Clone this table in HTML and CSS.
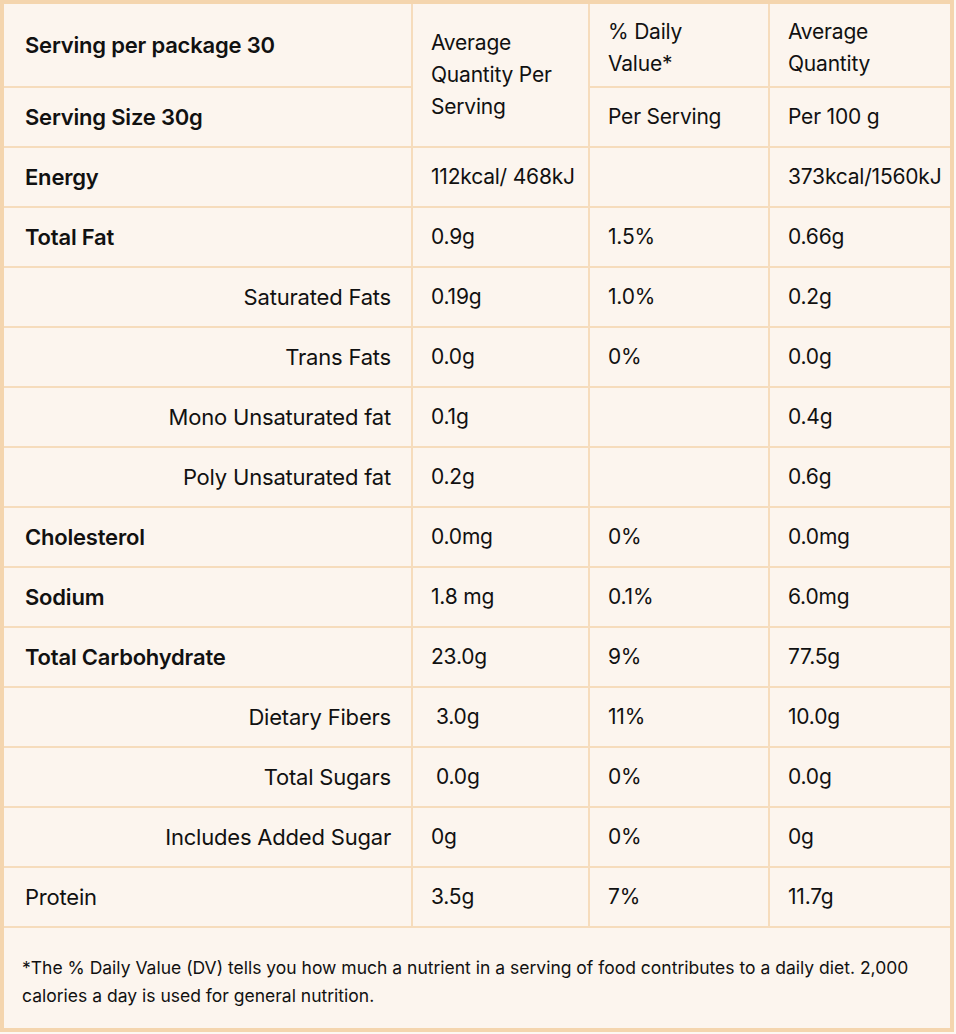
FILE: index.html
```html
<!DOCTYPE html>
<html lang="en">
<head>
<meta charset="utf-8">
<title>Nutrition Facts</title>
<link rel="stylesheet" href="styles.css">
</head>
<body>
<div class="panel">
<table class="facts">
  <colgroup>
    <col class="c1"><col class="c2"><col class="c3"><col class="c4">
  </colgroup>
  <tbody>
    <tr class="h1">
      <td class="name">Serving per package 30</td>
      <td rowspan="2" class="val">Average<br>Quantity Per<br>Serving</td>
      <td class="val top">% Daily<br>Value*</td>
      <td class="val top">Average<br>Quantity</td>
    </tr>
    <tr class="h2">
      <td class="name">Serving Size 30g</td>
      <td class="val">Per Serving</td>
      <td class="val">Per 100 g</td>
    </tr>
    <tr><td class="name">Energy</td><td class="val">112kcal/ 468kJ</td><td class="val"></td><td class="val">373kcal/1560kJ</td></tr>
    <tr><td class="name">Total Fat</td><td class="val">0.9g</td><td class="val">1.5%</td><td class="val">0.66g</td></tr>
    <tr><td class="sub">Saturated Fats</td><td class="val">0.19g</td><td class="val">1.0%</td><td class="val">0.2g</td></tr>
    <tr><td class="sub">Trans Fats</td><td class="val">0.0g</td><td class="val">0%</td><td class="val">0.0g</td></tr>
    <tr><td class="sub">Mono Unsaturated fat</td><td class="val">0.1g</td><td class="val"></td><td class="val">0.4g</td></tr>
    <tr><td class="sub">Poly Unsaturated fat</td><td class="val">0.2g</td><td class="val"></td><td class="val">0.6g</td></tr>
    <tr><td class="name">Cholesterol</td><td class="val">0.0mg</td><td class="val">0%</td><td class="val">0.0mg</td></tr>
    <tr><td class="name">Sodium</td><td class="val">1.8 mg</td><td class="val">0.1%</td><td class="val">6.0mg</td></tr>
    <tr><td class="name">Total Carbohydrate</td><td class="val">23.0g</td><td class="val">9%</td><td class="val">77.5g</td></tr>
    <tr><td class="sub">Dietary Fibers</td><td class="val ind">3.0g</td><td class="val">11%</td><td class="val">10.0g</td></tr>
    <tr><td class="sub">Total Sugars</td><td class="val ind">0.0g</td><td class="val">0%</td><td class="val">0.0g</td></tr>
    <tr><td class="sub">Includes Added Sugar</td><td class="val">0g</td><td class="val">0%</td><td class="val">0g</td></tr>
    <tr><td class="plain">Protein</td><td class="val">3.5g</td><td class="val">7%</td><td class="val">11.7g</td></tr>
    <tr class="foot">
      <td colspan="4" class="note">*The % Daily Value (DV) tells you how much a nutrient in a serving of food contributes to a daily diet. 2,000 calories a day is used for general nutrition.</td>
    </tr>
  </tbody>
</table>
</div>
</body>
</html>
```

FILE: styles.css
```css
html, body {
  margin: 0;
  padding: 0;
  background: #fdf8f3;
}

body {
  font-family: Inter, "Noto Sans", "Liberation Sans", sans-serif;
  color: #111111;
}

.panel {
  width: 946px;
  height: 1024px;
  border: 4px solid #f4d5ae;
  background: #fcf5ee;
}

.facts {
  width: 946px;
  height: 1024px;
  border-collapse: collapse;
  border-style: hidden;
  table-layout: fixed;
}

.c1 { width: 408px; }
.c2 { width: 177px; }
.c3 { width: 180px; }
.c4 { width: 181px; }

.facts td {
  border: 2px solid #f6dcbc;
  padding: 0 4px 0 18px;
  font-size: 22px;
  letter-spacing: -0.2px;
  line-height: 32px;
  vertical-align: middle;
}

.facts tr { height: 60px; }
.facts tr.h1 { height: 83px; }
.facts tr.h2 { height: 60px; }
.facts tr.foot { height: 101px; }

.facts td.val {
  font-size: 21px;
  white-space: nowrap;
}

.facts td.top {
  padding-top: 6px;
}

.facts td.name {
  font-weight: 600;
  padding-left: 21px;
}

.facts td.plain {
  padding-left: 21px;
}

.facts td.sub {
  text-align: right;
  padding-right: 20px;
}

.facts td.ind {
  padding-left: 23px;
}

.facts td.note {
  font-size: 17.5px;
  letter-spacing: 0;
  line-height: 28px;
  padding: 8px 20px 0 18px;
}
```
